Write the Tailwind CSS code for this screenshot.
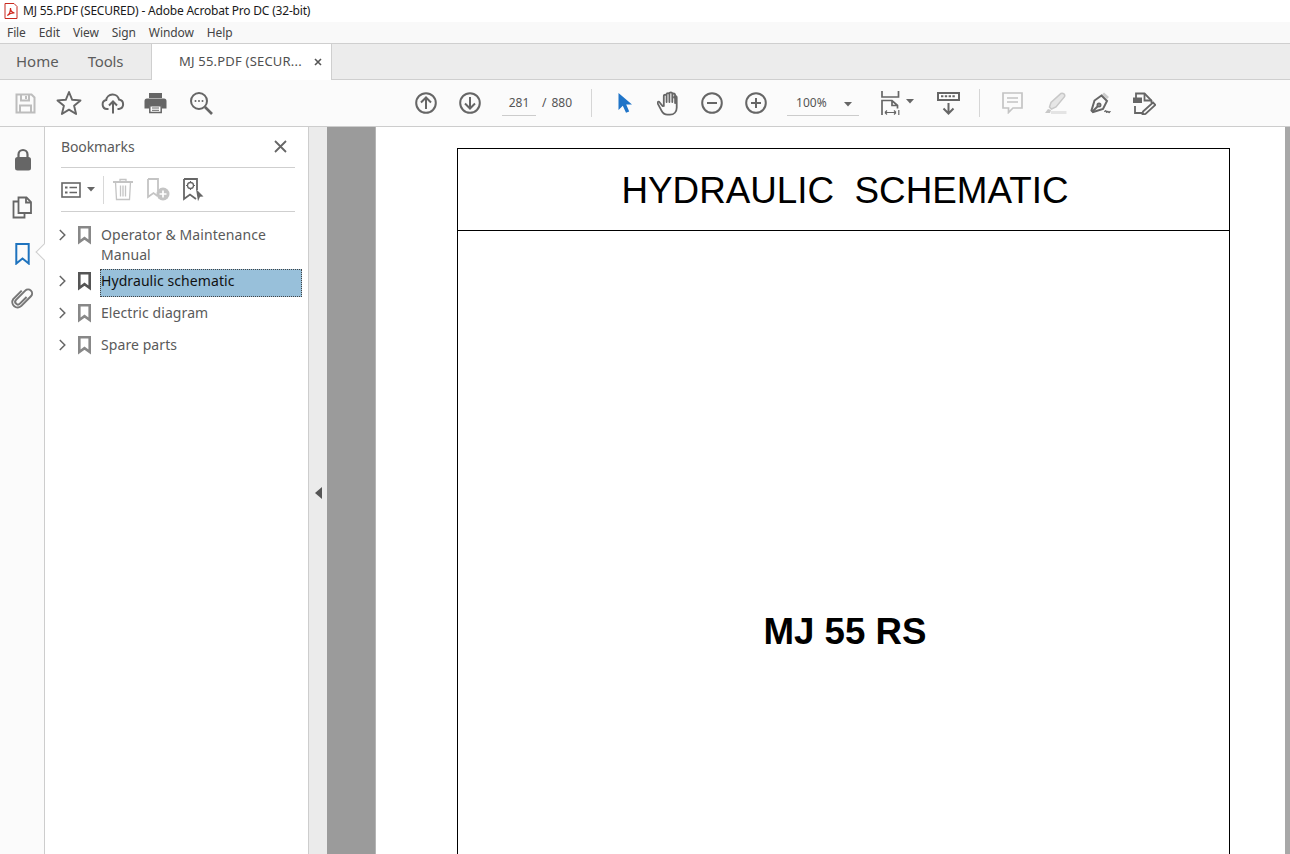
<!DOCTYPE html>
<html><head><meta charset="utf-8"><script src="https://cdn.jsdelivr.net/npm/@tailwindcss/browser@4"></script></head>
<body class="w-[1290px] h-[854px] overflow-hidden bg-white font-['Noto_Sans','Open_Sans',sans-serif] text-[#505050]">
<div class="flex flex-col h-[854px]">
  <!-- title -->
  <div class="h-[22px] flex items-center bg-white pl-[4px] text-[12px] text-[#1a1a1a] shrink-0">
    <svg width="14" height="16" viewBox="0 0 14 16" class="mr-[5px]"><path d="M1 .5h9l3 3v12H1z" fill="#fff" stroke="#c8281e"/><path d="M3.300 12.500c1.800-1 3.200-4 3.200-7.500 0 2.500 1.500 4.500 4 5-2.500-.2-5 .8-7.200 2.500z" fill="none" stroke="#d0281e" stroke-width="1.200"/></svg>
    <span class="tracking-[-0.2px]">MJ 55.PDF (SECURED) - Adobe Acrobat Pro DC (32-bit)</span>
  </div>
  <!-- menu -->
  <div class="h-[21px] flex items-center bg-[#f9f9f9] pl-[7px] text-[12px] text-[#444] gap-[13px] tracking-[-0.1px] shrink-0">
    <span>File</span><span>Edit</span><span>View</span><span>Sign</span><span>Window</span><span>Help</span>
  </div>
  <!-- tabs -->
  <div class="h-[37px] flex bg-[#ececec] border-t border-b border-[#cfcfcf] text-[#5c5c5c] shrink-0">
    <div class="w-[151px] flex items-center pl-[16px] gap-[29px] text-[15px] pb-px"><span>Home</span><span class="tracking-[-0.2px]">Tools</span></div>
    <div class="w-[181px] -mb-px bg-white border-l border-r border-[#cfcfcf] flex items-center pl-[27px] text-[13px] text-[#505050] pb-px relative">
      <span class="tracking-[0.2px]">MJ 55.PDF (SECUR...</span>
      <svg width="8" height="8" viewBox="0 0 8 8" class="absolute right-[9px] top-[14px]"><path d="M1 1l6 6M7 1L1 7" stroke="#555" stroke-width="1.600"/></svg>
    </div>
  </div>
  <!-- toolbar -->
  <div class="h-[47px] relative flex items-center bg-[#fbfbfb] border-b border-[#cdcdcd] shrink-0 text-[12px]">
    <div class="flex items-center pl-[15px] w-[415px] shrink-0">
      <svg width="21" height="21" viewBox="0 0 21 21" fill="none" stroke="#bdbdbd" stroke-width="2"><path d="M1.500 1.500h15l3 3v15h-18z"/><path d="M6 1.500v6h8v-6M11 3v3M5 19.500v-7h11v7"/></svg>
      <svg width="26" height="26" viewBox="0 0 26 26" fill="none" stroke="#666" stroke-width="1.900" stroke-linejoin="round" class="ml-[20px]"><path d="M13 2l3.200 7.800 8.300.6-6.400 5.400 2 8.200L13 19.600 5.900 24l2-8.200L1.500 10.400l8.300-.6z"/></svg>
      <svg width="24" height="24" viewBox="0 0 24 24" fill="none" stroke="#666" stroke-width="2" class="ml-[19px]"><path d="M7.500 18H6a4.500 4.500 0 0 1-.8-8.900A6.500 6.500 0 0 1 18 8.500a4.800 4.800 0 0 1 0 9.500h-1.500"/><path d="M12 22.500V11M8 14.500l4-4 4 4"/></svg>
      <svg width="23" height="22" viewBox="0 0 23 22" class="ml-[19px]"><path d="M5 1h13v5H5z" fill="#666"/><path d="M3 6.500h17a2.500 2.500 0 0 1 2.500 2.500v7.500H18V13H5v3.500H.5V9A2.500 2.500 0 0 1 3 6.500z" fill="#666"/><path d="M5.800 13.800h11.400v6.700H5.800z" fill="#fff" stroke="#666" stroke-width="1.500"/><path d="M8 16h7M8 18.300h7" stroke="#666"/></svg>
      <svg width="24" height="24" viewBox="0 0 24 24" fill="none" stroke="#666" stroke-width="2" class="ml-[22px]"><circle cx="10" cy="10" r="8"/><path d="M16 16l7 7" stroke-width="2.600"/><circle cx="6.500" cy="10" r="1" fill="#666" stroke="none"/><circle cx="10" cy="10" r="1" fill="#666" stroke="none"/><circle cx="13.500" cy="10" r="1" fill="#666" stroke="none"/></svg>
    </div>
    <div class="flex items-center">
      <svg width="22" height="22" viewBox="0 0 22 22" fill="none" stroke="#666" stroke-width="2"><circle cx="11" cy="11" r="9.800"/><path d="M11 17V5.500M6 10.500l5-5 5 5"/></svg>
      <svg width="22" height="22" viewBox="0 0 22 22" fill="none" stroke="#666" stroke-width="2" class="ml-[22px]"><circle cx="11" cy="11" r="9.800"/><path d="M11 5v11.500M6 11.500l5 5 5-5"/></svg>
      <div class="ml-[21px] w-[34px] h-[26px] border-b border-[#ccc] flex items-center justify-center text-[12px] text-[#555] pt-px">281</div>
      <span class="ml-[6px] text-[12px]">/</span>
      <span class="ml-[5px] text-[12px] text-[#555]">880</span>
      <div class="ml-[19px] w-px h-[28px] bg-[#d6d6d6]"></div>
      <svg width="16" height="22" viewBox="0 0 16 22" class="ml-[25px]"><path d="M1.500 1v17l4.300-4.200 3.200 7 3.200-1.400-3-6.800h5.800z" fill="#1f74c8"/></svg>
      <svg width="23" height="25" viewBox="0 0 23 25" fill="none" stroke="#666" stroke-width="1.800" stroke-linecap="round" stroke-linejoin="round" class="ml-[24px]"><path d="M5.500 15l-3-3.800c-1-1.300-2.500 0-1.700 1.500l3.700 7c1.200 2.500 3.300 4 6 4h2.500c4 0 6.700-3 6.700-7V6.500c0-2-2.600-2-2.600 0M18.100 12V4c0-2-2.800-2-2.800 0M15.300 11V2.800c0-2-2.900-2-2.900 0V11M12.400 3.500c0-1.800-2.800-1.800-2.800 0V11M9.600 5c0-1.800-2.800-1.800-2.800 0v10"/></svg>
      <svg width="22" height="22" viewBox="0 0 22 22" fill="none" stroke="#666" stroke-width="2" class="ml-[21px]"><circle cx="11" cy="11" r="9.800"/><path d="M6 11h10"/></svg>
      <svg width="22" height="22" viewBox="0 0 22 22" fill="none" stroke="#666" stroke-width="2" class="ml-[22px]"><circle cx="11" cy="11" r="9.800"/><path d="M6 11h10M11 6v10"/></svg>
      <div class="ml-[20px] w-[72px] h-[26px] border-b border-[#ccc] flex items-center pl-[9px] pt-px text-[12px] text-[#555] relative">100%<svg width="8" height="5" viewBox="0 0 8 5" class="absolute right-[7px] top-[12px]"><path d="M0 0h8L4 4.500z" fill="#666"/></svg></div>
      <svg width="20" height="25" viewBox="0 0 20 25" fill="none" stroke="#666" stroke-width="1.700" class="ml-[22px]"><path d="M1 0v6h16.500V0"/><path d="M1 24V9.500h10l5.500 5v3M11 9.500v5h5.500"/><path d="M4 21.500h11M4 21.500l2-2M4 21.500l2 2M15 21.500l-2-2M15 21.500l-2 2M17.800 19v5" stroke-width="1.200"/></svg>
      <svg width="8" height="5" viewBox="0 0 8 5" class="ml-[5px] -mt-[3px]"><path d="M0 0h8L4 4.500z" fill="#666"/></svg>
      <svg width="23" height="23" viewBox="0 0 23 23" class="ml-[23px]"><path d="M1 1h21v7H1z" fill="#fff" stroke="#666" stroke-width="2"/><path d="M4 3.300h2.400v2H4zM7.800 3.300h2.400v2H7.800zM11.600 3.300h2.400v2h-2.400zM15.400 3.300h2.400v2h-2.400z" fill="#666"/><path d="M11.500 11v10.500M6.500 16.500l5 5 5-5" fill="none" stroke="#666" stroke-width="2"/></svg>
      <div class="ml-[19px] w-px h-[28px] bg-[#d6d6d6]"></div>
      <svg width="21" height="22" viewBox="0 0 21 22" fill="none" stroke="#c4c4c4" stroke-width="1.700" class="ml-[22px]"><path d="M1 1h19v15H11l-4.500 4.500V16H1z"/><path d="M5 6h11M5 10h11"/></svg>
      <svg width="23" height="22" viewBox="0 0 23 22" class="ml-[21px]"><path d="M17 1.500c2-1 4.500 1 3.500 3.200L12 15l-4.500 2 -2-2 1.500-4.500z" fill="#e6e6e6" stroke="#c8c8c8" stroke-width="1.500"/><path d="M1 21l3-4 3 1-1 3z" fill="#c8c8c8"/><path d="M7 19h15.500v3H7z" fill="#e4e4e4"/></svg>
      <svg width="24" height="24" viewBox="0 0 24 24" fill="none" stroke="#666" stroke-width="2" class="ml-[22px]"><path d="M14 2.500l5 4.500" stroke="#ccc" stroke-width="3"/><path d="M12.500 4.500l5.500 5.500-4 8-10 3-1.500-1.500 3-10z"/><path d="M3 21l6-6"/><circle cx="10" cy="14" r="1.500"/><path d="M15.500 21c1-2 1.500-1.500 2 0s1-2 2 0 1-1.500 2 0" stroke-width="1.300"/></svg>
      <svg width="24" height="24" viewBox="0 0 24 24" fill="none" stroke="#666" stroke-width="1.800" class="ml-[19px]"><path d="M4 9V2.500h8.500l7 7V12M3 15v7h8"/><path d="M12.500 2.500v7h7"/><path d="M1 6.500h9v5.500H1z" fill="#666" stroke="none"/><path d="M21 11.500l2.300 2.300-9.800 9.200-3 .5.500-3z"/></svg>
    </div>
  </div>
  <!-- body -->
  <div class="flex flex-1 min-h-0">
    <!-- rail -->
    <div class="w-[45px] border-r border-[#cdcdcd] bg-[#fbfbfb] flex flex-col items-center shrink-0 relative">
      <svg width="18" height="23" viewBox="0 0 18 23" class="mt-[21px] ml-px"><path d="M4.500 10V6.500a4.500 4.500 0 0 1 9 0V10" fill="none" stroke="#666" stroke-width="2.200"/><rect x="1" y="9" width="16" height="13.500" rx="2.500" fill="#666"/></svg>
      <svg width="20" height="23" viewBox="0 0 20 23" fill="none" stroke="#666" stroke-width="1.800" class="mt-[25px]"><path d="M6.500 17V1.500h8l4.500 4.500v11z"/><path d="M14 1.500V6.500h5"/><path d="M6 5.500H1.500v16h11V17"/></svg>
      <svg width="15" height="22" viewBox="0 0 15 22" fill="none" stroke="#1e73be" stroke-width="2" class="mt-[24px]"><path d="M1.300 1h12.400v19.500L7.500 15.500 1.300 20.500z"/></svg>
      <svg width="22" height="22" viewBox="0 0 22 22" fill="none" stroke="#777" stroke-width="2" class="mt-[22px] overflow-visible"><path transform="rotate(45 11 11)" d="M13.500 7v9.500a2.700 2.700 0 0 1-5.400 0V3.500a4 4 0 0 1 8 0v13.500a5.300 5.300 0 0 1-10.500 1v-12"/></svg>
      <div class="absolute left-[38px] top-[119px] w-[12px] h-[12px] rotate-45 bg-white border-l border-b border-[#cdcdcd]"></div>
    </div>
    <!-- panel -->
    <div class="w-[263px] bg-white shrink-0 pl-[16px] pr-[6px] text-[14px]">
      <div class="h-[41px] mr-[7px] border-b border-[#cfcfcf] flex items-center justify-between">
        <span class="text-[14px] text-[#5a5a5a] tracking-[-0.1px] pb-[2px]">Bookmarks</span>
        <svg width="13" height="13" viewBox="0 0 13 13" class="mr-[8px] mb-[2px]"><path d="M1 1l11 11M12 1L1 12" stroke="#666" stroke-width="1.800"/></svg>
      </div>
      <div class="h-[44px] mr-[7px] border-b border-[#cfcfcf] flex items-center">
        <svg width="20" height="16" viewBox="0 0 20 16" fill="none" stroke="#666" stroke-width="1.600"><rect x="1" y="1" width="18" height="14"/><path d="M4 4.500h2.500v2H4zM4 9.500h2.500v2H4z" fill="#666" stroke="none"/><path d="M8.500 5.500H16M8.500 10.500H16"/></svg>
        <svg width="8" height="5" viewBox="0 0 8 5" class="ml-[6px]"><path d="M0 0h8L4 4.500z" fill="#666"/></svg>
        <div class="ml-[8px] w-px h-[28px] bg-[#d8d8d8]"></div>
        <svg width="20" height="23" viewBox="0 0 20 23" fill="none" stroke="#c4c4c4" stroke-width="1.700" class="ml-[9px]"><path d="M0 4h20" stroke-width="2"/><path d="M7 4V1.500h6V4M2.500 4l1 17.500h13l1-17.500M7.500 7.500v11M10 7.500v11M12.500 7.500v11" stroke-width="1.300"/></svg>
        <svg width="23" height="23" viewBox="0 0 23 23" class="ml-[14px]"><path d="M1 1h10v12M1 1v18l5.500-4 4 3" fill="none" stroke="#c4c4c4" stroke-width="1.800"/><circle cx="16" cy="16" r="6.500" fill="#c4c4c4"/><path d="M12.500 16h7M16 12.500v7" stroke="#fff" stroke-width="1.700"/></svg>
        <svg width="21" height="24" viewBox="0 0 21 24" class="ml-[13px]"><path d="M1 1h13v11M1 1v20l6-4.500 6 4.500" fill="none" stroke="#666" stroke-width="1.800"/><circle cx="7.500" cy="7.500" r="3" fill="none" stroke="#666" stroke-width="1.300"/><path d="M7.500 3v1M7.500 11v1M3 7.500h1M11 7.500h1" stroke="#666"/><path d="M13 11l7.500 7.500-3.500.3-2 4.500z" fill="#666"/></svg>
      </div>
      <div class="pt-[13px] text-[14px] leading-[20px] text-[#5a5a5a] tracking-[0.08px]">
        <div class="flex h-[44px]">
          <div class="w-[18px] -ml-px pt-[4px] shrink-0"><svg width="7" height="12" viewBox="0 0 7 12" fill="none" stroke="#666" stroke-width="1.500" class="-ml-px"><path d="M.8 1l5 5-5 5"/></svg></div>
          <div class="w-[23px] pt-[1px] shrink-0"><svg width="13" height="19" viewBox="0 0 13 19" fill="none" stroke="#888" stroke-width="2.600"><path d="M1.300 1.300h10.400v14.700L6.500 12.200 1.300 16z"/></svg></div>
          <div>Operator &amp; Maintenance<br>Manual</div>
        </div>
        <div class="flex h-[28px] items-center">
          <div class="w-[18px] -ml-px mb-[4px] shrink-0 flex"><svg width="7" height="12" viewBox="0 0 7 12" fill="none" stroke="#666" stroke-width="1.500" class="-ml-px"><path d="M.8 1l5 5-5 5"/></svg></div>
          <div class="w-[23px] mb-[4px] shrink-0 flex"><svg width="13" height="19" viewBox="0 0 13 19" fill="none" stroke="#555" stroke-width="2.600"><path d="M1.300 1.300h10.400v14.700L6.500 12.200 1.300 16z"/></svg></div>
          <div class="flex-1 h-[28px] -ml-px bg-[#98c0da] border border-dotted border-[#444] flex items-center pb-[4px] text-[#111]">Hydraulic schematic</div>
        </div>
        <div class="flex h-[32px] items-center">
          <div class="w-[18px] -ml-px shrink-0 flex"><svg width="7" height="12" viewBox="0 0 7 12" fill="none" stroke="#666" stroke-width="1.500" class="-ml-px"><path d="M.8 1l5 5-5 5"/></svg></div>
          <div class="w-[23px] shrink-0 flex"><svg width="13" height="19" viewBox="0 0 13 19" fill="none" stroke="#888" stroke-width="2.600"><path d="M1.300 1.300h10.400v14.700L6.500 12.200 1.300 16z"/></svg></div>
          <div>Electric diagram</div>
        </div>
        <div class="flex h-[32px] items-center">
          <div class="w-[18px] -ml-px shrink-0 flex"><svg width="7" height="12" viewBox="0 0 7 12" fill="none" stroke="#666" stroke-width="1.500" class="-ml-px"><path d="M.8 1l5 5-5 5"/></svg></div>
          <div class="w-[23px] shrink-0 flex"><svg width="13" height="19" viewBox="0 0 13 19" fill="none" stroke="#888" stroke-width="2.600"><path d="M1.300 1.300h10.400v14.700L6.500 12.200 1.300 16z"/></svg></div>
          <div>Spare parts</div>
        </div>
      </div>
    </div>
    <!-- splitter -->
    <div class="w-[19px] bg-[#ebebeb] border-l border-[#cdcdcd] shrink-0 flex items-center pl-[6px] pb-[1px] pt-[5px]">
      <svg width="7" height="12" viewBox="0 0 7 12"><path d="M7 0v12L0 6z" fill="#555"/></svg>
    </div>
    <!-- canvas -->
    <div class="w-[48px] bg-[#9b9b9b] shrink-0"></div>
    <div class="w-[910px] border-l border-[#b5b5b5] bg-white shrink-0 pt-[21px] pl-[81px] overflow-hidden">
      <div class="w-[773px] h-[760px] border border-black font-['Liberation_Sans',sans-serif] text-black">
        <div class="h-[82px] border-b border-black flex items-center justify-center text-[36.8px] whitespace-pre pt-[2px] pl-[3px]">HYDRAULIC  SCHEMATIC</div>
        <div class="pt-[379px] pl-[3px] text-center text-[36.7px] leading-[44px] font-bold">MJ 55 RS</div>
      </div>
    </div>
    <div class="flex-1 bg-[#a8a8a8]"></div>
  </div>
</div>
</body></html>
